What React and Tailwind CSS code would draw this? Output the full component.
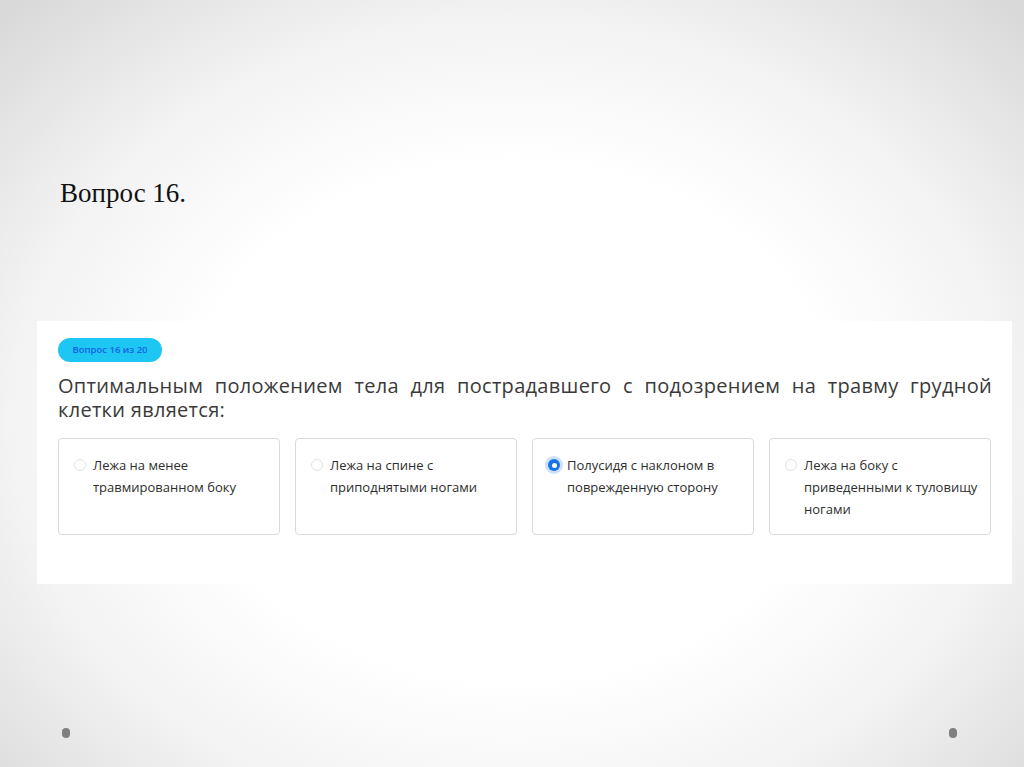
const options = [
  { id: 1, text: "Лежа на менее травмированном боку" },
  { id: 2, text: "Лежа на спине с приподнятыми ногами" },
  { id: 3, text: "Полусидя с наклоном в поврежденную сторону" },
  { id: 4, text: "Лежа на боку с приведенными к туловищу ногами" },
];

function Radio({ checked }) {
  if (checked) {
    return (
      <span className="mt-[5px] flex h-[12px] w-[12px] shrink-0 items-center justify-center rounded-full bg-[#1a73e8] ring-[3px] ring-[#cfe0fb]">
        <span className="h-[5px] w-[5px] rounded-full bg-white" />
      </span>
    );
  }
  return (
    <span className="mt-[5px] h-[12px] w-[12px] shrink-0 rounded-full border border-[#e2e2e2] bg-white" />
  );
}

export default function App() {
  const selected = 3;

  return (
    <div className="flex h-[767px] w-[1024px] flex-col bg-[radial-gradient(ellipse_70%_75%_at_50%_55%,#ffffff_45%,#f3f3f3_70%,#d9d9d9_100%)] font-['Open_Sans',sans-serif]">
      <h1 className="ml-[60px] mt-[180px] font-['Liberation_Serif',serif] text-[27px] leading-none text-[#111]">
        Вопрос 16.
      </h1>

      <div className="ml-[37px] mt-[114px] h-[263px] w-[975px] bg-white pl-[21px] pr-[20px] pt-[17px]">
        <div className="flex h-[24px] w-[104px] items-center justify-center rounded-full bg-[#1ec6f4] text-[9.5px] font-semibold text-[#1462e0]">
          Вопрос 16 из 20
        </div>

        <p className="mt-[12px] text-justify text-[20px] leading-[24px] tracking-[0.3px] text-[#3a3a3a]">
          Оптимальным положением тела для пострадавшего с подозрением на травму грудной клетки является:
        </p>

        <div className="mt-[16px] grid grid-cols-4 gap-[15px] pr-px">
          {options.map((o) => (
            <div
              key={o.id}
              className="flex h-[97px] gap-[7px] rounded-[4px] border border-[#dadada] pl-[15px] pr-[12px] pt-[15px]"
            >
              <Radio checked={o.id === selected} />
              <span className="text-[13px] font-medium leading-[22px] text-[#2e2e2e]">
                {o.text}
              </span>
            </div>
          ))}
        </div>
      </div>

      <div className="mt-auto flex items-center justify-between pb-[29px] pl-[62px] pr-[67px]">
        <span className="block h-[10px] w-[8px] shrink-0 rounded-full bg-[#7f7f7f]" />
        <span className="block h-[10px] w-[8px] shrink-0 rounded-full bg-[#7f7f7f]" />
      </div>
    </div>
  );
}
